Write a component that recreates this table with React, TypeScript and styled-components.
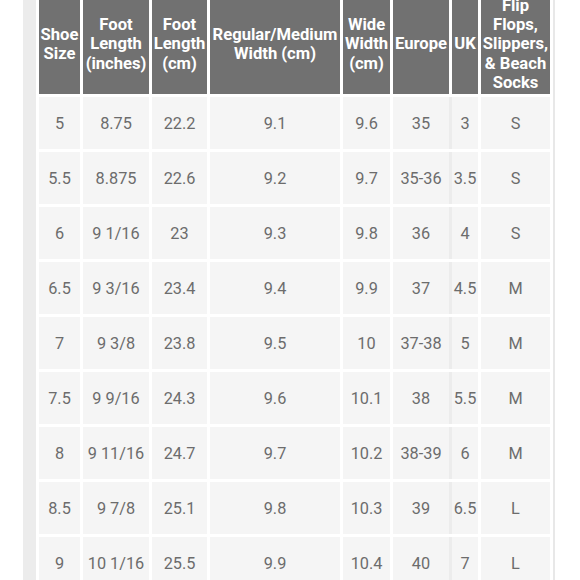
import React from "react";
import styled, { createGlobalStyle } from "styled-components";

const GlobalStyle = createGlobalStyle`
  html, body {
    margin: 0;
    padding: 0;
    height: 580px;
    overflow: hidden;
    background: #ffffff;
    font-family: Roboto, "Liberation Sans", sans-serif;
  }
`;

const Page = styled.div`
  display: flex;
  align-items: flex-start;
  padding-left: 23px;
`;

const Rail = styled.div`
  width: 13px;
  height: 600px;
  background-color: #ececec;
`;

const TableWrap = styled.div`
  margin-top: -9px;
  border-right: 2px solid #e8e8e8;
`;

const Table = styled.table`
  border-collapse: separate;
  border-spacing: 3px;
  table-layout: fixed;
`;

const HeadCell = styled.th<{ $w: number }>`
  width: ${(p) => p.$w}px;
  height: 100px;
  padding: 0;
  background-color: #717171;
  color: #ffffff;
  font-size: 16.6px;
  font-weight: 700;
  line-height: 19.3px;
  text-align: center;
  vertical-align: middle;
  white-space: nowrap;
`;

const Cell = styled.td<{ $uk?: boolean }>`
  height: 52px;
  padding: 0;
  background-color: #f5f5f5;
  color: #6c6c6c;
  font-size: 16.3px;
  text-align: center;
  vertical-align: middle;
  white-space: nowrap;
  box-shadow: ${(p) => (p.$uk ? "-3px 0 0 #ececec" : "none")};
`;

const headers: { w: number; lines: string[] }[] = [
  { w: 41, lines: ["Shoe", "Size"] },
  { w: 66, lines: ["Foot", "Length", "(inches)"] },
  { w: 55, lines: ["Foot", "Length", "(cm)"] },
  { w: 130, lines: ["Regular/Medium", "Width (cm)"] },
  { w: 47, lines: ["Wide", "Width", "(cm)"] },
  { w: 56, lines: ["Europe"] },
  { w: 26, lines: ["UK"] },
  { w: 69, lines: ["Flip", "Flops,", "Slippers,", "& Beach", "Socks"] },
];

const rows = [
  ["5", "8.75", "22.2", "9.1", "9.6", "35", "3", "S"],
  ["5.5", "8.875", "22.6", "9.2", "9.7", "35-36", "3.5", "S"],
  ["6", "9 1/16", "23", "9.3", "9.8", "36", "4", "S"],
  ["6.5", "9 3/16", "23.4", "9.4", "9.9", "37", "4.5", "M"],
  ["7", "9 3/8", "23.8", "9.5", "10", "37-38", "5", "M"],
  ["7.5", "9 9/16", "24.3", "9.6", "10.1", "38", "5.5", "M"],
  ["8", "9 11/16", "24.7", "9.7", "10.2", "38-39", "6", "M"],
  ["8.5", "9 7/8", "25.1", "9.8", "10.3", "39", "6.5", "L"],
  ["9", "10 1/16", "25.5", "9.9", "10.4", "40", "7", "L"],
];

export default function App() {
  return (
    <>
      <GlobalStyle />
      <Page>
        <Rail />
        <TableWrap>
          <Table>
            <thead>
              <tr>
                {headers.map((h, i) => (
                  <HeadCell key={i} $w={h.w}>
                    {h.lines.map((l, j) => (
                      <React.Fragment key={j}>
                        {j > 0 && <br />}
                        {l}
                      </React.Fragment>
                    ))}
                  </HeadCell>
                ))}
              </tr>
            </thead>
            <tbody>
              {rows.map((r, i) => (
                <tr key={i}>
                  {r.map((v, j) => (
                    <Cell key={j} $uk={j === 6}>
                      {v}
                    </Cell>
                  ))}
                </tr>
              ))}
            </tbody>
          </Table>
        </TableWrap>
      </Page>
    </>
  );
}
